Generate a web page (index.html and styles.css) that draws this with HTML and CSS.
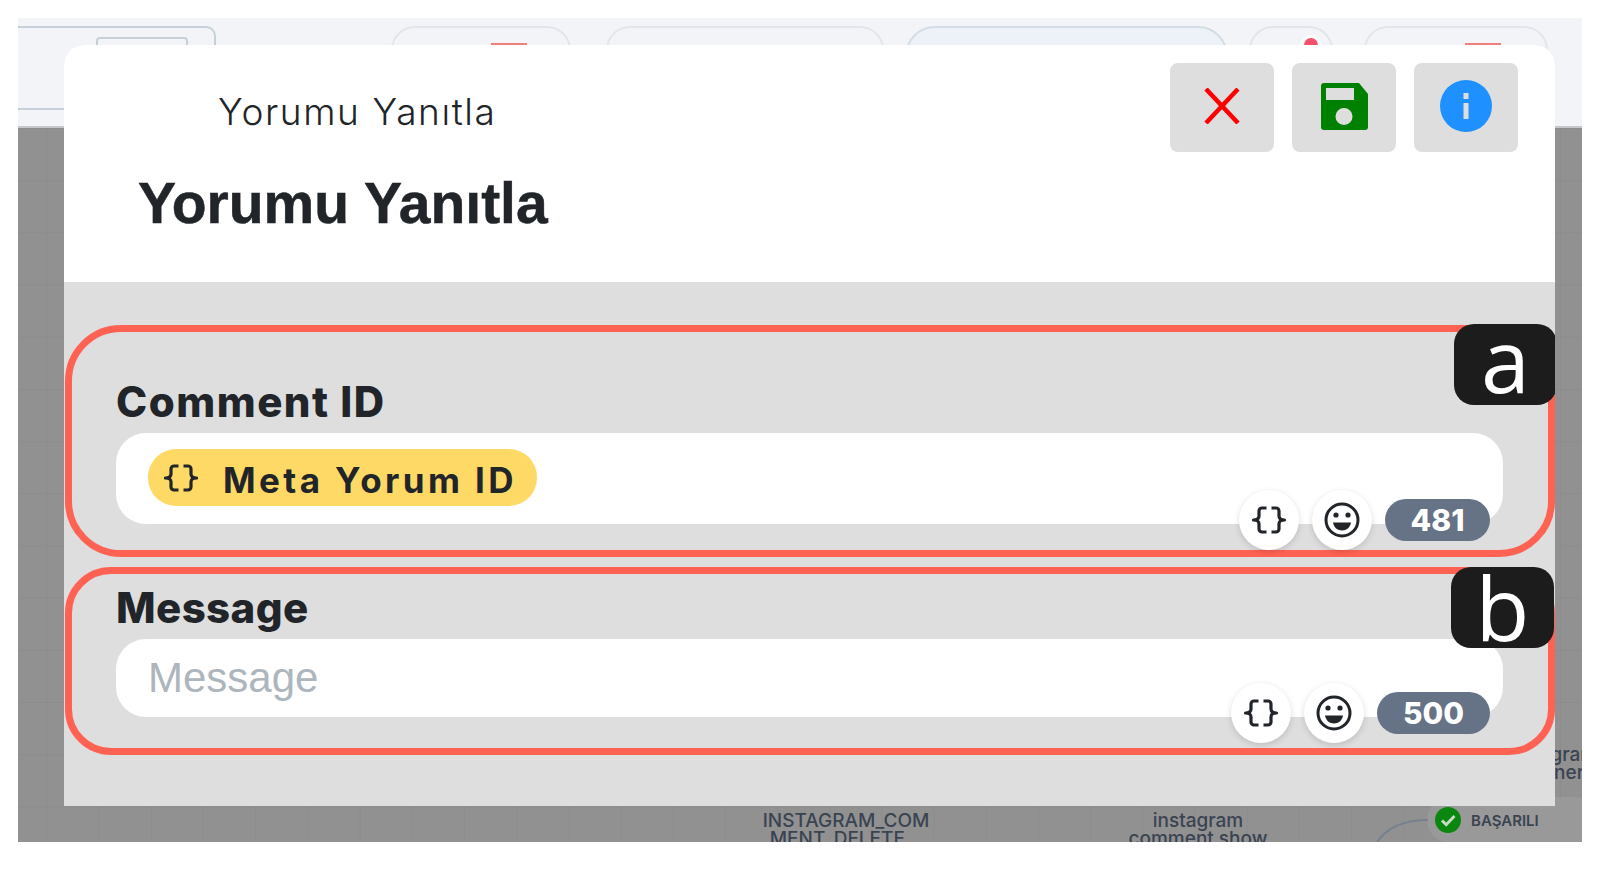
FILE: index.html
```html
<!DOCTYPE html>
<html lang="en">
<head>
    <meta charset="UTF-8">
    <title>Yorumu Yanıtla</title>
    <link rel="stylesheet" href="styles.css">
</head>
<body>
    <div class="shot">
        <div class="topbar">
            <div class="tab tab-first"><span class="tab-inner"></span></div>
            <div class="tab tab-two"><span class="tab-mark"></span></div>
            <div class="tab tab-three"></div>
            <div class="tab tab-active"></div>
            <div class="tab tab-dot"><span class="tab-dot-mark"></span></div>
            <div class="tab tab-last"><span class="tab-mark tab-mark-last"></span></div>
        </div>

        <div class="canvas">
            <div class="node node-delete">INSTAGRAM_COM<br>MENT_DELETE...</div>
            <div class="node node-show">instagram<br>comment show</div>
            <div class="node node-side">instagram<br>banner</div>
            <div class="status">
                <svg width="26" height="26" viewBox="0 0 26 26"><circle cx="13" cy="13" r="13" fill="#0b860f"/><path d="M7 13.5l4.2 4.2L19.5 9" fill="none" stroke="#c5dcc5" stroke-width="3"/></svg>
                <span>BAŞARILI</span>
            </div>
            <svg class="edge" width="55" height="26" viewBox="0 0 55 26"><path d="M54 1C30 1 12 8 2 25" fill="none" stroke="#76818f" stroke-width="2"/></svg>
        </div>

        <div class="modal">
            <div class="modal-header">
                <div class="titles">
                    <div class="title-small">Yorumu Yanıtla</div>
                    <h2 class="title-big">Yorumu Yanıtla</h2>
                </div>
                <div class="header-btns">
                    <button class="head-btn">
                        <svg width="36" height="36" viewBox="0 0 36 36"><path d="M2 1l32 34M34 1L2 35" stroke="#f00" stroke-width="4.5" fill="none"/></svg>
                    </button>
                    <button class="head-btn">
                        <svg width="47" height="47" viewBox="0 0 47 47"><path fill="#008000" fill-rule="evenodd" d="M3 0h35l9 11v33a3 3 0 0 1-3 3H3a3 3 0 0 1-3-3V3a3 3 0 0 1 3-3zM5 5v12h28V5zM23 25a8.500 8.500 0 1 0 0 17a8.500 8.500 0 1 0 0-17z"/></svg>
                    </button>
                    <button class="head-btn">
                        <svg width="52" height="52" viewBox="0 0 52 52"><circle cx="26" cy="26" r="26" fill="#1e90ff"/><rect x="23.500" y="13" width="5" height="6" fill="#dedede"/><rect x="23.500" y="23" width="5" height="16" fill="#dedede"/></svg>
                    </button>
                </div>
            </div>

            <div class="modal-body">
                <div class="field field-a">
                    <span class="letter letter-a">a</span>
                    <label class="field-label label-a">Comment ID</label>
                    <div class="input-box input-a">
                        <span class="chip">
                            <svg class="braces" width="34" height="28" viewBox="0 0 34 28"><path d="M14.500 2H10a3 3 0 0 0-3 3v5c0 2.500-2 4-5.500 4c3.500 0 5.500 1.500 5.500 4v5a3 3 0 0 0 3 3h4.500M19.500 2H24a3 3 0 0 1 3 3v5c0 2.500 2 4 5.500 4c-3.500 0-5.500 1.500-5.500 4v5a3 3 0 0 1-3 3h-4.500"/></svg>
                            <span class="chip-text">Meta Yorum ID</span>
                        </span>
                        <div class="input-tools">
                            <span class="round-btn"><svg class="braces" width="36" height="28" viewBox="0 0 34 28"><path d="M14.500 2H10a3 3 0 0 0-3 3v5c0 2.500-2 4-5.500 4c3.500 0 5.500 1.500 5.500 4v5a3 3 0 0 0 3 3h4.500M19.500 2H24a3 3 0 0 1 3 3v5c0 2.500 2 4 5.500 4c-3.500 0-5.500 1.500-5.500 4v5a3 3 0 0 1-3 3h-4.500"/></svg></span>
                            <span class="round-btn"><svg width="36" height="36" viewBox="0 0 36 36"><circle cx="18" cy="18" r="16" fill="none" stroke="#212529" stroke-width="3"/><circle cx="12" cy="13" r="2.600" fill="#212529"/><circle cx="24" cy="13" r="2.600" fill="#212529"/><path d="M9 20.500h18c-.8 5-4.500 8-9 8s-8.200-3-9-8z" fill="#212529"/></svg></span>
                            <span class="count count-a">481</span>
                        </div>
                    </div>
                </div>

                <div class="field field-b">
                    <span class="letter letter-b">b</span>
                    <label class="field-label label-b">Message</label>
                    <div class="input-box input-b">
                        <span class="placeholder">Message</span>
                        <div class="input-tools">
                            <span class="round-btn"><svg class="braces" width="36" height="28" viewBox="0 0 34 28"><path d="M14.500 2H10a3 3 0 0 0-3 3v5c0 2.500-2 4-5.500 4c3.500 0 5.500 1.500 5.500 4v5a3 3 0 0 0 3 3h4.500M19.500 2H24a3 3 0 0 1 3 3v5c0 2.500 2 4 5.500 4c-3.500 0-5.500 1.500-5.500 4v5a3 3 0 0 1-3 3h-4.500"/></svg></span>
                            <span class="round-btn"><svg width="36" height="36" viewBox="0 0 36 36"><circle cx="18" cy="18" r="16" fill="none" stroke="#212529" stroke-width="3"/><circle cx="12" cy="13" r="2.600" fill="#212529"/><circle cx="24" cy="13" r="2.600" fill="#212529"/><path d="M9 20.500h18c-.8 5-4.500 8-9 8s-8.200-3-9-8z" fill="#212529"/></svg></span>
                            <span class="count count-b">500</span>
                        </div>
                    </div>
                </div>
            </div>
        </div>
    </div>
</body>
</html>
```

FILE: styles.css
```css
* {
    box-sizing: border-box;
}

body {
    margin: 0;
    padding: 18px;
    height: 892px;
    overflow: hidden;
    background: #fff;
    font-family: 'Inter', sans-serif;
    color: #212529;
}

.shot {
    position: relative;
    width: 1564px;
    height: 824px;
    overflow: hidden;
    display: flex;
    flex-direction: column;
}

/* Page behind the modal */
.topbar {
    height: 110px;
    flex: none;
    display: flex;
    align-items: flex-start;
    padding-top: 8px;
    background: #f3f4f7;
    border-bottom: 2px solid #c4c8cc;
    overflow: hidden;
}

.tab {
    position: relative;
    height: 60px;
    border: 2px solid #e2e5ec;
    border-radius: 24px;
    flex: none;
}

.tab-first {
    width: 198px;
    height: 84px;
    border-color: #c6d0d8;
    border-left: none;
    border-radius: 0 10px 0 0;
}

.tab-inner {
    position: absolute;
    left: 78px;
    top: 9px;
    width: 92px;
    height: 30px;
    border: 2px solid #c6d0d8;
    border-radius: 4px;
}

.tab-two {
    width: 180px;
    margin-left: 175px;
}

.tab-mark {
    position: absolute;
    left: 98px;
    top: 15px;
    width: 36px;
    height: 4px;
    background: #f0807a;
}

.tab-mark-last {
    left: 99px;
}

.tab-three {
    width: 278px;
    margin-left: 35px;
}

.tab-active {
    width: 323px;
    margin-left: 21px;
    border-color: #d3dde6;
    border-radius: 36px;
    background: #edf1f8;
}

.tab-dot {
    width: 84px;
    margin-left: 21px;
}

.tab-dot-mark {
    position: absolute;
    left: 50px;
    top: 7px;
    width: 20px;
    height: 20px;
    border-radius: 50%;
    background: #f5516c;
    border: 3px solid #fff;
}

.tab-last {
    width: 184px;
    margin-left: 31px;
}

.canvas {
    position: relative;
    flex: 1;
    background-color: #919191;
    background-image:
        linear-gradient(#8c8c8c 1px, transparent 1px),
        linear-gradient(90deg, #8c8c8c 1px, transparent 1px);
    background-size: 52.2px 52.2px;
    background-position: 28.5px 0;
    overflow: hidden;
}

.node {
    position: absolute;
    width: 200px;
    text-align: center;
    font-size: 19px;
    line-height: 17.5px;
    font-weight: 500;
    color: #3a4451;
}

.node-delete {
    left: 728px;
    top: 684px;
}

.node-show {
    left: 1080px;
    top: 684px;
}

.node-side {
    left: 1434px;
    top: 618px;
    width: 200px;
}

.edge {
    position: absolute;
    left: 1356px;
    top: 691px;
}

.status {
    position: absolute;
    left: 1409px;
    top: 669px;
    width: 170px;
    height: 46px;
    display: flex;
    align-items: center;
    gap: 10px;
    padding-left: 8px;
    border-radius: 23px;
    background: #999;
    font-size: 15px;
    font-weight: 600;
    color: #3a4451;
}

/* Modal */
.modal {
    position: absolute;
    left: 46px;
    top: 27px;
    width: 1491px;
    height: 761px;
    border-radius: 20px 20px 0 0;
    overflow: hidden;
    background: #dedede;
}

.modal-header {
    height: 237px;
    background: #fff;
    display: flex;
    justify-content: space-between;
    padding: 18px 37px 0 0;
}

.title-small {
    margin: 28px 0 0 154px;
    font-size: 37px;
    line-height: 42px;
    font-weight: 300;
    letter-spacing: 1.6px;
}

.title-big {
    margin: 38px 0 0 74px;
    font-family: 'Liberation Sans', sans-serif;
    font-size: 57px;
    line-height: 64px;
    font-weight: 700;
    -webkit-text-stroke: 0.5px #212529;
}

.header-btns {
    display: flex;
    gap: 18px;
}

.head-btn {
    width: 104px;
    height: 89px;
    padding: 0 0 3px;
    border: none;
    border-radius: 8px;
    background: #dedede;
    display: flex;
    align-items: center;
    justify-content: center;
}

.modal-body {
    padding: 43px 0 0 1px;
    display: flex;
    flex-direction: column;
    gap: 10px;
}

.field {
    position: relative;
    width: 1490px;
    padding-left: 44px;
    border: 7px solid #ff6252;
}

.field-a {
    height: 232px;
    padding-top: 46px;
    border-radius: 56px;
}

.field-b {
    height: 188px;
    padding-top: 10px;
    border-radius: 46px;
}

.field-label {
    display: block;
    height: 55px;
    font-size: 42px;
    font-weight: 800;
}

.label-a {
    line-height: 47px;
    letter-spacing: 1.5px;
}

.label-b {
    line-height: 47px;
    letter-spacing: 0.4px;
}

.letter {
    position: absolute;
    z-index: 2;
    width: 103px;
    height: 81px;
    background: #1c1c1c;
    border-radius: 20px;
    color: #fff;
    font-family: 'Open Sans', sans-serif;
    font-size: 88px;
    font-weight: 500;
    text-align: center;
}

.letter-a {
    top: -8px;
    right: -9px;
    line-height: 71px;
}

.letter-b {
    top: -7px;
    right: -6px;
    line-height: 81px;
}

.input-box {
    position: relative;
    width: 1387px;
    background: #fff;
    border-radius: 30px;
}

.input-a {
    height: 91px;
    padding: 16px 32px;
}

.input-b {
    height: 78px;
    padding: 0 32px;
}

.placeholder {
    font-family: 'Liberation Sans', sans-serif;
    font-size: 42px;
    line-height: 78px;
    color: #adb5bd;
}

.chip {
    display: inline-flex;
    align-items: center;
    gap: 25px;
    height: 57px;
    padding: 0 20px 0 16px;
    background: #ffd966;
    border-radius: 28px;
    font-size: 35px;
    font-weight: 700;
    letter-spacing: 3.4px;
}

.chip-text {
    padding-top: 4px;
}

.braces path {
    fill: none;
    stroke: #212529;
    stroke-width: 3.2;
    stroke-linejoin: round;
}

.input-tools {
    position: absolute;
    right: 13px;
    display: flex;
    align-items: center;
    gap: 13px;
}

.input-a .input-tools {
    top: 57px;
}

.input-b .input-tools {
    top: 44px;
}

.round-btn {
    width: 60px;
    height: 60px;
    border-radius: 50%;
    background: #fff;
    box-shadow: 0 2px 6px rgba(0, 0, 0, 0.15);
    display: flex;
    align-items: center;
    justify-content: center;
}

.count {
    height: 42px;
    border-radius: 21px;
    background: #667386;
    color: #fff;
    font-size: 30px;
    line-height: 42px;
    font-weight: 800;
    text-align: center;
}

.count-a {
    width: 105px;
}

.count-b {
    width: 113px;
}
```
